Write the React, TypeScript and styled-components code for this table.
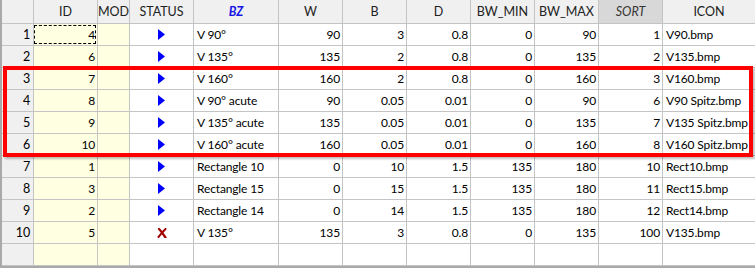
import styled, { createGlobalStyle } from "styled-components";

const GlobalStyle = createGlobalStyle`
    html, body {
        margin: 0;
        padding: 0;
        background: #ffffff;
    }
    body {
        font-family: Lato, "Noto Sans", sans-serif;
        font-size: 12px;
        letter-spacing: -0.15px;
        color: #000;
    }
`;

const COLS = "32px 64px 32px 64px 85px 64px 64px 64px 64px 64px 64px 93px";

const Frame = styled.div`
    position: relative;
    width: 755px;
    height: 268px;
    overflow: hidden;
    box-sizing: border-box;
    border-left: 2px solid #a9a9a9;
    border-bottom: 2px solid #a9a9a9;
`;

const Grid = styled.div`
    display: grid;
    grid-template-columns: ${COLS};
    grid-template-rows: 24px;
    grid-auto-rows: 22px;
`;

const Line = styled.div`
    display: contents;
`;

const Cell: any = styled.div`
    box-sizing: border-box;
    border-right: 1px solid #c4c4c4;
    border-bottom: 1px solid #c4c4c4;
    display: flex;
    align-items: center;
    justify-content: ${(p: any) =>
        p.align === "right" ? "flex-end" : p.align === "center" ? "center" : "flex-start"};
    padding: ${(p: any) => (p.align === "right" ? "0 2px 0 0" : p.align === "center" ? "0" : "0 0 0 3px")};
    background: ${(p: any) => p.bg || "#ffffff"};
    white-space: nowrap;
    overflow: hidden;
    position: relative;
`;

const HeadCell: any = styled(Cell)`
    justify-content: center;
    padding: 0;
    font-size: 12.5px;
    letter-spacing: 0;
    background: ${(p: any) => (p.sorted ? "#d8d8d8" : "#f0f0f0")};
    color: ${(p: any) => (p.keycol ? "#1515e6" : p.sorted ? "#333" : "#222")};
    font-style: ${(p: any) => (p.keycol || p.sorted ? "italic" : "normal")};
    font-weight: ${(p: any) => (p.keycol ? "bold" : "normal")};
`;

const RowHead = styled(Cell)`
    background: #f0f0f0;
    justify-content: flex-end;
    padding: 0 3px 0 0;
    font-size: 12.5px;
`;

const Focus = styled.div`
    position: absolute;
    inset: 1px 1px 1px 0;
    border: 1px dashed #000;
    pointer-events: none;
`;

const Highlight = styled.div`
    position: absolute;
    left: 1px;
    top: 66px;
    width: 750px;
    height: 91px;
    box-sizing: border-box;
    border: 4px solid #ff0000;
    box-shadow: 2px 2px 2px rgba(0, 0, 0, 0.25);
    pointer-events: none;
`;

const YELLOW = "#ffffe1";

const Play = () => (
    <svg width="7" height="11" viewBox="0 0 7 11">
        <polygon points="0,0 7,5.5 0,11" fill="#0000ff" />
    </svg>
);

const Cross = () => (
    <svg width="10" height="10" viewBox="0 0 10 10">
        <path d="M2 1 C4 3 6 6 8.5 9.5" stroke="#a00000" strokeWidth="2.2" fill="none" strokeLinecap="round" />
        <path d="M8.5 1 C6 3.5 4 6 1.5 9" stroke="#a00000" strokeWidth="2" fill="none" strokeLinecap="round" />
    </svg>
);

type Row = [number, number, string, number, number, number, number, number, number, string, boolean];

const rows: Row[] = [
    [1, 4, "V 90°", 90, 3, 0.8, 0, 90, 1, "V90.bmp", true],
    [2, 6, "V 135°", 135, 2, 0.8, 0, 135, 2, "V135.bmp", true],
    [3, 7, "V 160°", 160, 2, 0.8, 0, 160, 3, "V160.bmp", true],
    [4, 8, "V 90° acute", 90, 0.05, 0.01, 0, 90, 6, "V90 Spitz.bmp", true],
    [5, 9, "V 135° acute", 135, 0.05, 0.01, 0, 135, 7, "V135 Spitz.bmp", true],
    [6, 10, "V 160° acute", 160, 0.05, 0.01, 0, 160, 8, "V160 Spitz.bmp", true],
    [7, 1, "Rectangle 10", 0, 10, 1.5, 135, 180, 10, "Rect10.bmp", true],
    [8, 3, "Rectangle 15", 0, 15, 1.5, 135, 180, 11, "Rect15.bmp", true],
    [9, 2, "Rectangle 14", 0, 14, 1.5, 135, 180, 12, "Rect14.bmp", true],
    [10, 5, "V 135°", 135, 3, 0.8, 0, 135, 100, "V135.bmp", false],
];

const headers = ["ID", "MOD", "STATUS", "BZ", "W", "B", "D", "BW_MIN", "BW_MAX", "SORT", "ICON"];

export default function App() {
    return (
        <>
            <GlobalStyle />
            <Frame>
                <Grid>
                    <Line>
                        <HeadCell />
                        {headers.map((h) => (
                            <HeadCell key={h} keycol={h === "BZ"} sorted={h === "SORT"}>
                                {h}
                            </HeadCell>
                        ))}
                    </Line>
                    {rows.map((r) => (
                        <Line key={r[0]}>
                            <RowHead>{r[0]}</RowHead>
                            <Cell align="right" bg={YELLOW}>
                                {r[1]}
                                {r[0] === 1 && <Focus />}
                            </Cell>
                            <Cell bg={YELLOW} />
                            <Cell align="center">{r[10] ? <Play /> : <Cross />}</Cell>
                            <Cell>{r[2]}</Cell>
                            <Cell align="right">{r[3]}</Cell>
                            <Cell align="right">{r[4]}</Cell>
                            <Cell align="right">{r[5]}</Cell>
                            <Cell align="right">{r[6]}</Cell>
                            <Cell align="right">{r[7]}</Cell>
                            <Cell align="right">{r[8]}</Cell>
                            <Cell>{r[9]}</Cell>
                        </Line>
                    ))}
                    <Line>
                        <RowHead />
                        <Cell bg={YELLOW} />
                        <Cell bg={YELLOW} />
                        {Array.from({ length: 9 }).map((_, i) => (
                            <Cell key={i} />
                        ))}
                    </Line>
                </Grid>
                <Highlight />
            </Frame>
        </>
    );
}
